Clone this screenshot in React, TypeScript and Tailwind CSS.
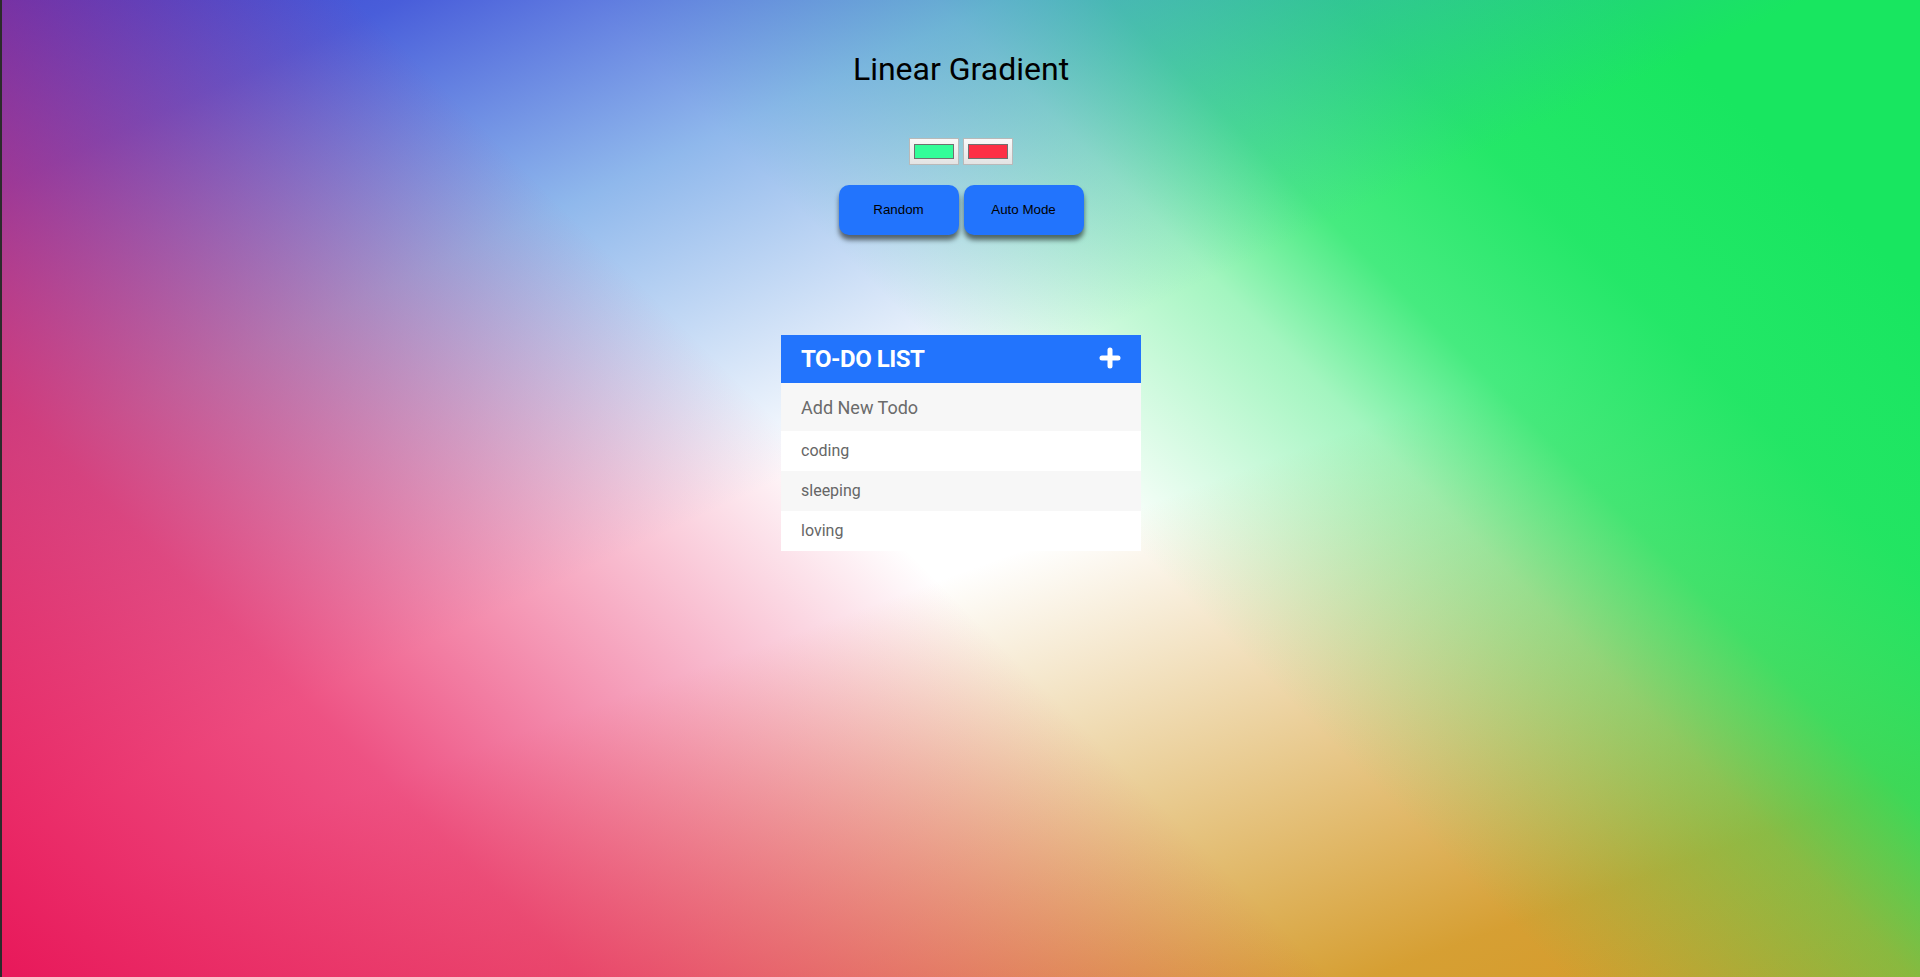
import React, { useState } from "react";

const todos = ["coding", "sleeping", "loving"];

function ColorSwatch({ color }: { color: string }) {
  return (
    <div className="w-[50px] h-[27px] px-[4px] py-[5px] border border-[#b9b9b9] bg-gradient-to-b from-[#f9f9f9] to-[#e3e3e3]">
      <div className="w-full h-full border border-[#707070]" style={{ backgroundColor: color }} />
    </div>
  );
}

export default function App() {
  const [newTodo, setNewTodo] = useState("");

  return (
    <div className="min-h-screen border-l-2 border-[#2b2b2b] bg-white bg-[linear-gradient(45deg,#e8185a_0%,rgba(232,24,90,0.75)_20%,rgba(232,24,90,0)_46%),linear-gradient(335deg,rgba(74,140,224,0)_55%,rgba(74,140,224,0.62)_75%,rgba(63,85,216,0.95)_90%,#3a40cc_100%),linear-gradient(45deg,rgba(24,230,96,0)_54%,rgba(24,230,96,0.4)_66%,rgba(24,230,96,0.8)_72%,rgba(24,230,96,0.95)_80%,#18e660_90%),linear-gradient(160deg,rgba(212,154,40,0)_55%,rgba(212,154,40,0.55)_74%,rgba(212,154,40,0.95)_88%,#d49a28_100%)] flex flex-col items-center pt-[50px] font-['Roboto',sans-serif]">
      <h1 className="text-[32px] leading-[38px] font-normal text-black">Linear Gradient</h1>

      {/* colour pickers */}
      <div className="mt-[50px] flex gap-[4px]">
        <ColorSwatch color="#33fd99" />
        <ColorSwatch color="#fd2f45" />
      </div>

      <div className="mt-[20px] flex gap-[5px]">
        <button className="w-[120px] h-[50px] rounded-[10px] bg-[#2274fd] text-black text-[13.33px] font-['Liberation_Sans',Arial,sans-serif] shadow-[0_5px_5px_rgba(0,0,0,0.55)] cursor-pointer">
          Random
        </button>
        <button className="w-[120px] h-[50px] rounded-[10px] bg-[#2274fd] text-black text-[13.33px] font-['Liberation_Sans',Arial,sans-serif] shadow-[0_5px_5px_rgba(0,0,0,0.55)] cursor-pointer">
          Auto Mode
        </button>
      </div>

      {/* todo list */}
      <div className="mt-[100px] w-[360px]">
        <div className="h-12 px-5 flex items-center justify-between bg-[#2274fd]">
          <h2 className="text-[24px] font-bold tracking-[-0.5px] text-white uppercase">To-Do List</h2>
          <svg width="22" height="22" viewBox="0 0 22 22" className="-mt-[2px]">
            <path d="M11 3v16M3 11h16" stroke="#fff" strokeWidth="5" strokeLinecap="round" fill="none" />
          </svg>
        </div>
        <input
          value={newTodo}
          onChange={(e) => setNewTodo(e.target.value)}
          placeholder="Add New Todo"
          className="block w-full h-12 px-5 bg-[#f7f7f7] text-[18px] text-[#666] placeholder:text-[#6b6b6b] outline-none"
        />
        <ul>
          {todos.map((t, i) => (
            <li
              key={t}
              className={`h-10 px-5 flex items-center text-[16px] text-[#666] ${i % 2 === 1 ? "bg-[#f7f7f7]" : "bg-white"}`}
            >
              {t}
            </li>
          ))}
        </ul>
      </div>
    </div>
  );
}
